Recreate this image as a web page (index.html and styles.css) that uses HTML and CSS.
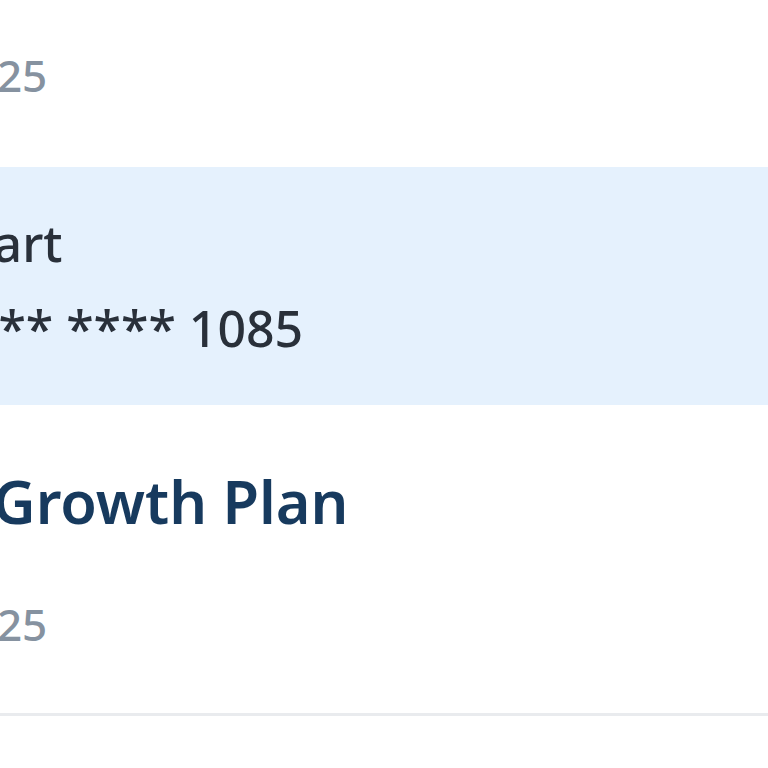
FILE: index.html
```html
<!DOCTYPE html>
<html lang="en">
<head>
<meta charset="utf-8">
<link rel="stylesheet" href="styles.css">
</head>
<body>
<main class="page">
  <section class="row row-date">
    <div class="inner"><span class="date">Jan 1, 2025</span></div>
  </section>
  <section class="row row-card">
    <div class="inner">
      <div class="card-name">Lidl Smart</div>
      <div class="card-number">**** **** **** 1085</div>
    </div>
  </section>
  <section class="row row-plan">
    <div class="inner">
      <div class="plan-title">Team Growth Plan</div>
      <div class="date date-second">Jan 1, 2025</div>
    </div>
  </section>
</main>
</body>
</html>
```
FILE: styles.css
```css
html, body {
  margin: 0;
  padding: 0;
  background: #ffffff;
  overflow: hidden;
  width: 768px;
  height: 768px;
}
body {
  font-family: "Noto Sans", "Open Sans", sans-serif;
}
.page {
  display: flex;
  flex-direction: column;
  width: 768px;
}
.inner {
  margin-left: -179px;
  white-space: nowrap;
}
.date {
  display: block;
  font-size: 44px;
  line-height: 60px;
  font-weight: 500;
  color: #8692a0;
}
.row-date {
  padding-top: 45px;
  padding-bottom: 62px;
}
.row-card {
  background: #e5f1fd;
  padding-top: 41px;
  padding-bottom: 42px;
}
.card-name, .card-number {
  font-size: 50px;
  line-height: 70px;
  font-weight: 500;
  color: #29303a;
}
.card-number {
  margin-top: 15px;
}
.row-plan {
  padding-top: 54px;
  padding-bottom: 59px;
  border-bottom: 3px solid #e9ebee;
}
.plan-title {
  font-size: 59.4px;
  line-height: 84px;
  font-weight: 600;
  color: #173a5e;
}
.date-second {
  margin-top: 51px;
}
```
